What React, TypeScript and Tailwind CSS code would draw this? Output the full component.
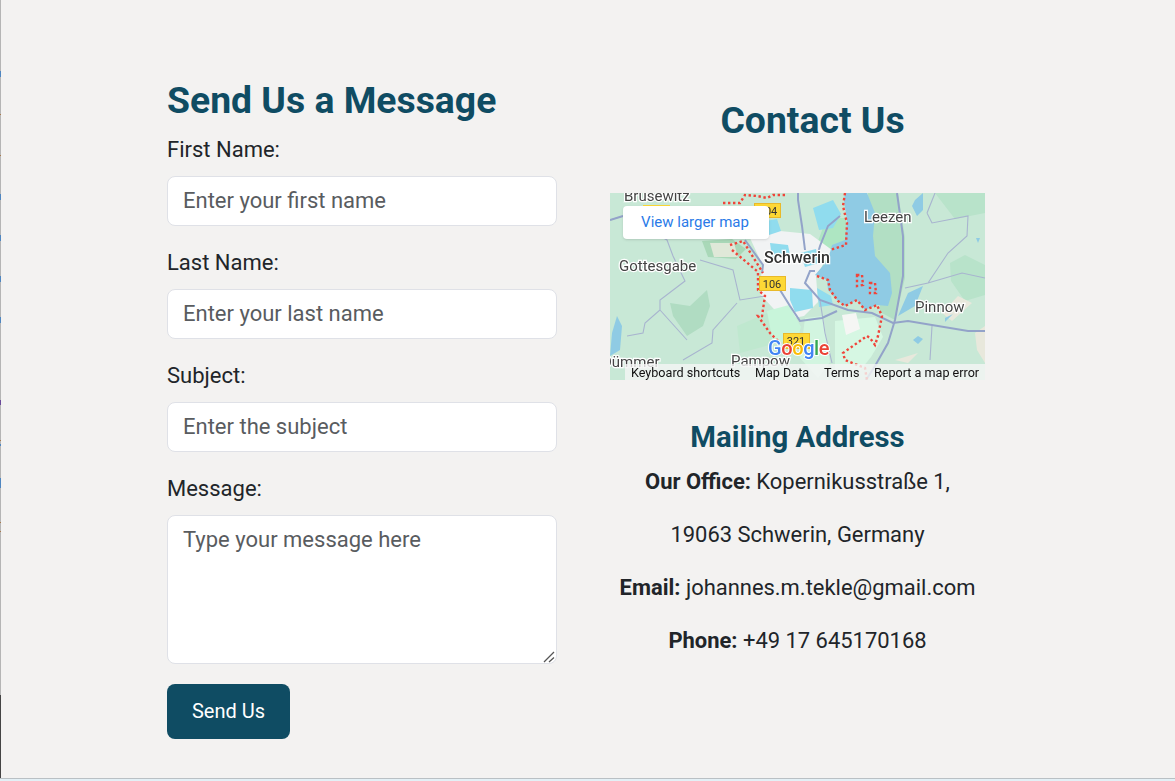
const fieldClass =
  "w-full rounded-lg border border-[#dfe1e7] bg-white px-[15px] text-[22px] text-[#212529] placeholder:text-[#595c5f] outline-none";

const leftTicks = [
  { y: 71, h: 6, c: "bg-[#4f86c0]" },
  { y: 114, h: 1, c: "bg-[#a8794a]" },
  { y: 155, h: 1, c: "bg-[#a8794a]" },
  { y: 194, h: 6, c: "bg-[#4f86c0]" },
  { y: 235, h: 6, c: "bg-[#4f86c0]" },
  { y: 276, h: 6, c: "bg-[#4f86c0]" },
  { y: 317, h: 6, c: "bg-[#4f86c0]" },
  { y: 400, h: 5, c: "bg-[#6a4a9a]" },
  { y: 440, h: 1, c: "bg-[#a8794a]" },
  { y: 444, h: 2, c: "bg-[#4f86c0]" },
  { y: 478, h: 10, c: "bg-[#4f86c0]" },
  { y: 522, h: 1, c: "bg-[#a8794a]" },
  { y: 531, h: 1, c: "bg-[#a8794a]" },
];

function Field({ label, placeholder }: { label: string; placeholder: string }) {
  return (
    <div className="mb-[22px]">
      <label className="mb-3 block h-[29px] text-[22px] leading-[29px]">{label}</label>
      <input type="text" placeholder={placeholder} className={`${fieldClass} h-[50px] pb-[2px]`} />
    </div>
  );
}

function MapEmbed() {
  const label = { fontFamily: "Roboto, sans-serif", fill: "#444", stroke: "#fff", strokeWidth: 2.5, paintOrder: "stroke" as const };
  return (
    <svg width="375" height="187" viewBox="0 0 375 187" className="block blur-[0.4px]">
      <rect width="375" height="187" fill="#c8e8d6" />
      {/* parks */}
      <path d="M60 110l20 3 17-16 3 16-7 20-16 10-14-20z" fill="#b0dcc2" />
      <path d="M127 133l30-13 16 20-6 10-37 10z" fill="#bfe8cf" />
      <path d="M258 0h30l7 45v40l-10 42-15-8 0-30-8-20-4-30z" fill="#b2dfc4" />
      <path d="M325 0h50v20l-30 6zM340 70l15-8 20 10v30l-20 6-14-20z" fill="#b8e3ca" />
      <path d="M92 48l30-2 14 10-10 10-28-2z" fill="#a9d8b8" />
      <path d="M100 50h24l4 14h-24z" fill="#dfe8d8" />
      <path d="M230 25h6l0 28-16 5-6 16-14-4 14-38z" fill="#aee6c2" />
      {/* built-up */}
      <path d="M140 45l20-8 40 4 22 16-16 26 2 26-14 14-20 4-24-26 2-30z" fill="#f1f3f4" />
      <path d="M157 118l22-6 12 22-4 14-24 2z" fill="#c8f5da" />
      <path d="M195 125l18-2 7 46-12 16-18-20z" fill="#d2f5e0" />
      <path d="M225 128l40-4 8 20-12 20-16 20-20-6z" fill="#d6f7e3" />
      <path d="M232 122l14-2 4 16-14 6z" fill="#f5f6f4" />
      <path d="M332 120l16-17 14 7-20 18zM365 140l10-7v37l-8-13zM285 167l23-7-10 10z" fill="#e8e8dc" />
      {/* water */}
      <path d="M235 0h22l8 20-2 23 2 20 15 17 2 20-4 13-11-1-12 5-8-10-12 6-8-6-9-10-1-10-12-5 13-15 4-15 13-5 2-20-3-19z" fill="#8fcbe4" />
      <path d="M203 15l20-8 8 14-8 14-14 2zM145 30l22-4 4 12-18 6zM160 50l18 2 2 10-18 2z" fill="#90dcee" />
      <path d="M180 95l22 2 1 18-18 4-5-12zM207 95l14 8 2 9-14 2zM190 60l16-4 3 14-14 4z" fill="#90dcee" />
      <path d="M298 100l15-7-8 20-17 10zM305 7l8-7v17l-6 6-5-10zM308 143l5 3-5 5-5-4zM335 125l8-4-8 8zM366 45l4 0-2 5z" fill="#8fcbe4" />
      <path d="M7 123l5 10-2 24-10 6 2-23z" fill="#8fcbe4" />
      {/* thin roads */}
      <g fill="none" stroke="#a8b4cf" strokeWidth="1.1">
        <path d="M0 27l13-4 44 24 6 16 12 25-25 19v10l-15 13-2 10-16 3M50 117l27 30" />
        <path d="M90 67l33 10 7 30 25-4M127 110l-24 27-1 13-29 17" />
        <path d="M210 107l5 33 7 30M317 20l5 10 36-7-1 20-19 17-20 30-23 5M317 20l8-20M318 90l34-10 23 5M322 133l-2 34" />
      </g>
      {/* main roads */}
      <g fill="none" stroke="#93a3c9" strokeWidth="2">
        <path d="M0 27l13-4" />
        <path d="M135 47l18 25-1 8" />
        <path d="M170 97l10 16 10 15 22-3 15-7" />
        <path d="M188 0v7l4 26 3 24" />
        <path d="M230 23l-12 10-8 20-2 7" />
        <path d="M205 78h-5l-5 12 15 17 28 10 24 3 21 10 15-2 60 10h17" />
        <path d="M287 0l6 43v40l-8 44-7 23-13 23-9 14" />
      </g>
      {/* district border */}
      <g fill="none" stroke="#f0443a" strokeWidth="2.400" strokeDasharray="2.4 2.6">
        <path d="M113 10h17l5-8 12 1 10 2 6-3h12" />
        <path d="M235 0l-2 13 4 17-1 22-16 5" />
        <path d="M207 83l11 4 2 10 8 11 7 5 12-6 8 10 12-5 5 11-4 20-3 9-5-7-3-2-24 17 2 7 20 8 2 12" />
        <path d="M247 82h5l1 10-6 1zM260 90h5l1 10h-6z" />
        <path d="M120 52l13-4 20 32M122 57l25 21" />
        <path d="M148 80v17l7 6-3 20h-4l12 17 10 10" />
      </g>
      {/* shields */}
      <g fontFamily="Roboto, sans-serif" fontSize="11" fill="#333">
        <rect x="33" y="12" width="27" height="14" fill="#fdd835" />
        <rect x="144.500" y="10.500" width="26" height="14" fill="#fdd835" stroke="#e9b92a" />
        <text x="158" y="22" textAnchor="middle">104</text>
        <rect x="149.500" y="83.500" width="26" height="14" fill="#fdd835" stroke="#e9b92a" />
        <text x="162" y="94.500" textAnchor="middle">106</text>
        <rect x="173.500" y="140.500" width="26" height="15" fill="#fdd835" stroke="#e9b92a" />
        <text x="186" y="152" textAnchor="middle">321</text>
      </g>
      {/* place names */}
      <text x="14" y="8" fontSize="15" {...label}>Brusewitz</text>
      <text x="9" y="78" fontSize="15" {...label}>Gottesgabe</text>
      <text x="254" y="29" fontSize="15" {...label}>Leezen</text>
      <text x="305" y="119" fontSize="15" {...label}>Pinnow</text>
      <text x="154" y="70" fontSize="16" fontWeight="500" {...label} fill="#333">Schwerin</text>
      <text x="121" y="173" fontSize="15" {...label}>Pampow</text>
      <text x="-8" y="174" fontSize="15" {...label}>Dümmer</text>
      {/* google mark */}
      <text x="158" y="162" fontFamily="Roboto, sans-serif" fontSize="20" fontWeight="500" letterSpacing="-0.4" stroke="#fff" strokeWidth="2" paintOrder="stroke">
        <tspan fill="#4285f4">G</tspan>
        <tspan fill="#ea4335">o</tspan>
        <tspan fill="#fbbc05">o</tspan>
        <tspan fill="#4285f4">g</tspan>
        <tspan fill="#34a853">l</tspan>
        <tspan fill="#ea4335">e</tspan>
      </text>
      {/* attribution */}
      <rect x="15" y="171" width="360" height="16" fill="#f5f5f5" fillOpacity="0.8" />
      <g fontFamily="Roboto, sans-serif" fontSize="12.600" fill="#111">
        <text x="21" y="184">Keyboard shortcuts</text>
        <text x="145" y="184">Map Data</text>
        <text x="214" y="184">Terms</text>
        <text x="264" y="184">Report a map error</text>
      </g>
    </svg>
  );
}

export default function App() {
  return (
    <div className="relative h-[781px] w-full overflow-hidden bg-[#f3f2f1] font-['Roboto',sans-serif] text-[#212529]">
      <div className="absolute left-0 top-0 h-[695px] w-px bg-[#b5b5b5]" />
      <div className="absolute left-0 top-[695px] h-[86px] w-px bg-[#444444]" />
      {leftTicks.map((t) => (
        <div
          key={t.y}
          className={`absolute left-0 w-px ${t.c}`}
          style={{ top: t.y, height: t.h }}
        />
      ))}
      <div className="absolute bottom-0 left-0 h-[3px] w-full border-t border-[#b9c0c4] bg-[#e3f0f6]" />

      <div className="flex pl-[167px] pt-[78px]">
        <div className="w-[390px]">
          <h2 className="mb-[13px] h-[44px] text-[37.33px] font-bold leading-[44px] text-[#0f4c63]">Send Us a Message</h2>
          <Field label="First Name:" placeholder="Enter your first name" />
          <Field label="Last Name:" placeholder="Enter your last name" />
          <Field label="Subject:" placeholder="Enter the subject" />
          <div className="mb-5">
            <label className="mb-3 block h-[29px] text-[22px] leading-[29px]">Message:</label>
            <div className="relative">
              <textarea placeholder="Type your message here" className={`${fieldClass} block h-[149px] resize-none py-[7px]`} />
              {/* browser resize grip */}
              <svg width="12" height="12" viewBox="0 0 12 12" className="absolute bottom-px right-[2px]" stroke="#555" strokeWidth="1.3">
                <path d="M1 11L11 1M6 11l5-4.500" />
              </svg>
            </div>
          </div>
          <button className="h-[55px] w-[123px] rounded-lg bg-[#0f4c63] pb-[2px] text-[20px] text-white">Send Us</button>
        </div>

        <div className="ml-[53px] w-[375px]">
          <h2 className="ml-[30px] mt-[20px] h-[44px] text-center text-[37.33px] font-bold leading-[44px] text-[#0f4c63]">Contact Us</h2>
          <div className="mt-[51px]">
            <div className="relative">
              <MapEmbed />
              <a className="absolute left-[13px] top-[13px] flex h-[33px] w-[146px] items-center justify-center rounded-sm bg-white pr-[2px] text-[15px] text-[#2a7ae8] shadow-sm">
                View larger map
              </a>
            </div>
          </div>
          <h3 className="mt-[39px] h-[36px] text-center text-[29.33px] font-bold leading-[36px] text-[#0f4c63]">Mailing Address</h3>
          <div className="text-center text-[21.95px] leading-[29px]">
            <p className="mt-[12px]"><strong>Our Office:</strong> Kopernikusstraße 1,</p>
            <p className="mt-[24px]">19063 Schwerin, Germany</p>
            <p className="mt-[24px]"><strong>Email:</strong> johannes.m.tekle@gmail.com</p>
            <p className="mt-[24px]"><strong>Phone:</strong> +49 17 645170168</p>
          </div>
        </div>
      </div>
    </div>
  );
}
